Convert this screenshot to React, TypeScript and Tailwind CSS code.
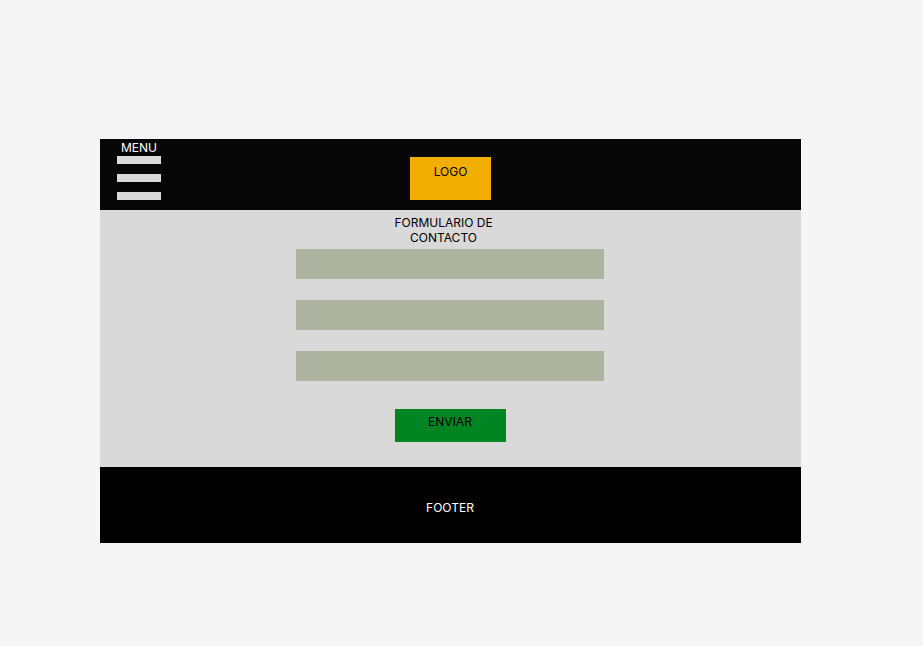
const fields = [
  { name: "nombre", label: "Nombre", type: "text" },
  { name: "correo", label: "Correo", type: "email" },
  { name: "mensaje", label: "Mensaje", type: "text" },
];

function Header() {
  return (
    <header className="grid grid-cols-[1fr_auto_1fr] items-start bg-[#060606] pb-[10px]">
      <button type="button" className="ml-[17px] flex w-11 flex-col items-center justify-self-start pt-px text-white">
        <span className="mb-px">MENU</span>
        <span className="flex w-full flex-col gap-[10px]">
          <span className="h-2 bg-[#d9d9d9]" />
          <span className="h-2 bg-[#d9d9d9]" />
          <span className="h-2 bg-[#d9d9d9]" />
        </span>
      </button>
      <a href="#inicio" className="mt-[18px] block h-[43px] w-[81px] bg-[#f2ae00] pt-[7px] text-center text-black">
        LOGO
      </a>
    </header>
  );
}

function ContactForm() {
  return (
    <main className="bg-[#d9d9d9] pt-[5px] pr-[17px] pb-[25px] pl-4">
      <form className="mx-auto flex w-full max-w-[308px] flex-col items-center">
        <h1 className="mr-[13px] mb-1 w-28 text-center">FORMULARIO DE CONTACTO</h1>
        <div className="flex w-full flex-col gap-[21px]">
          {fields.map((field) => (
            <input
              key={field.name}
              name={field.name}
              type={field.type}
              aria-label={field.label}
              className="h-[30px] w-full bg-[#acb39f] px-2"
            />
          ))}
        </div>
        <button type="submit" className="mt-7 flex h-[33px] w-[111px] justify-center bg-[#008522] pt-[5px]">
          ENVIAR
        </button>
      </form>
    </main>
  );
}

export default function App() {
  return (
    <div className="min-h-screen bg-[#f5f5f5] pt-[139px] pr-[122px] pb-[103px] pl-[100px] font-['Inter',sans-serif] text-[12px] leading-[15px] text-black">
      <Header />
      <ContactForm />
      <footer className="bg-black pt-[33px] pr-px pb-7 text-center text-white">FOOTER</footer>
    </div>
  );
}
